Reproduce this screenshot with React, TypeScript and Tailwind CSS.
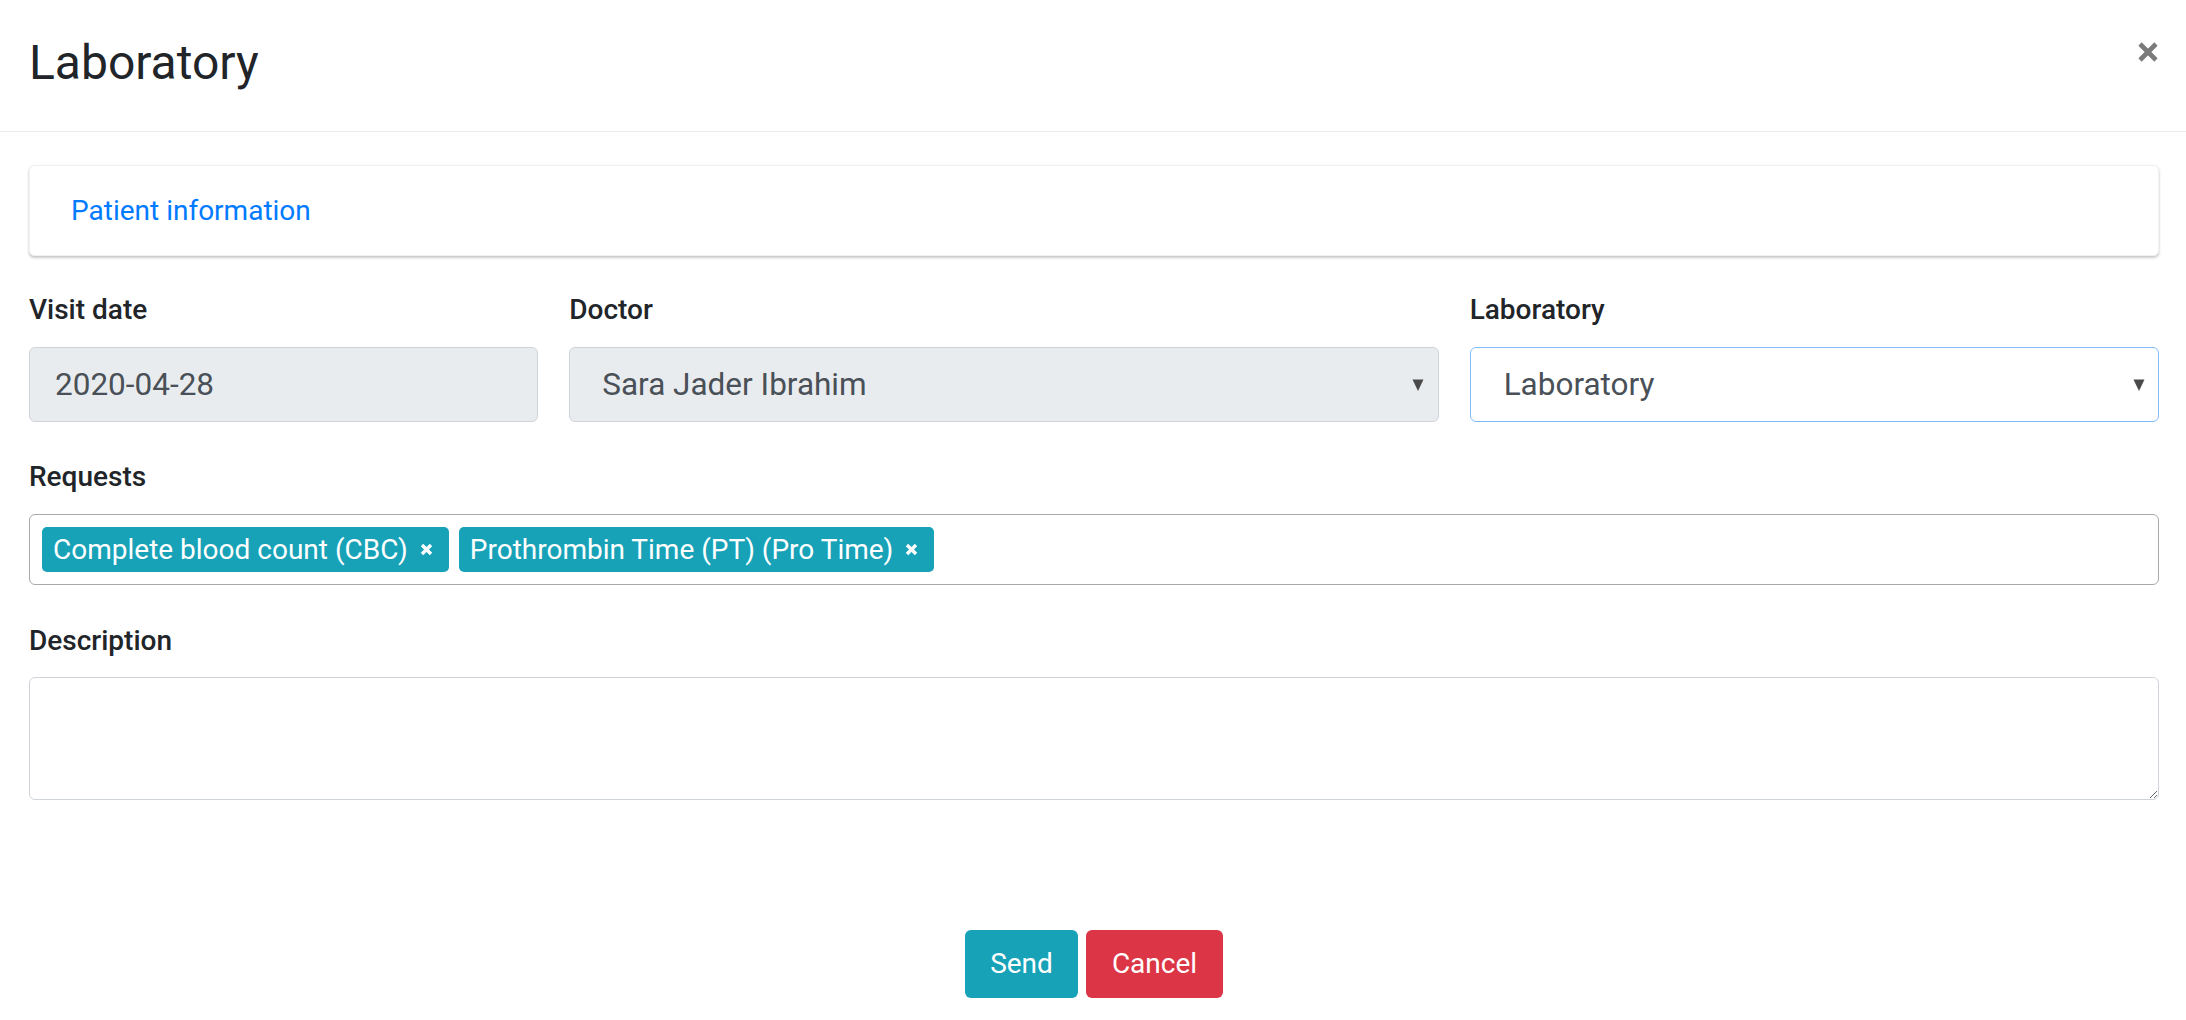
import React from "react";

function Caret() {
  return (
    <svg width="12" height="14" viewBox="0 0 12 14" className="shrink-0">
      <path d="M0.5 1.5 L11.5 1.5 L6 13 Z" fill="#4a4a4a" />
    </svg>
  );
}

function ChipX() {
  return (
    <svg width="13" height="13" viewBox="0 0 13 13" className="shrink-0">
      <path d="M2 2 L11 11 M11 2 L2 11" stroke="#ffffff" strokeWidth="3.4" strokeLinecap="butt" />
    </svg>
  );
}

function Chip({ label }: { label: string }) {
  return (
    <div className="flex h-[45px] items-center rounded-[5px] bg-[#17a2b8] pl-[11px] pr-[16px] text-[28px] leading-[42px] text-white">
      <span>{label}</span>
      <span className="ml-[12px] flex items-center">
        <ChipX />
      </span>
    </div>
  );
}

export default function App() {
  return (
    <div className="min-h-[1020px] w-full bg-white text-[#212529] [font-family:Roboto,'Liberation_Sans',sans-serif]">
      {/* Header */}
      <div className="flex h-[132px] items-start justify-between border-b border-[#e9ecef] pl-[29px] pr-[27px]">
        <h4 className="pt-[39px] text-[48px] font-normal leading-none">Laboratory</h4>
        <div className="pt-[41px]">
          <svg width="22" height="22" viewBox="0 0 22 22">
            <path d="M3 3 L19 19 M19 3 L3 19" stroke="#7a7a7a" strokeWidth="4.6" />
          </svg>
        </div>
      </div>

      {/* Body */}
      <div className="pl-[29px] pr-[27px]">
        {/* Card */}
        <div className="mt-[33px] flex h-[91px] items-center rounded-[5px] border border-[#f0f0f0] bg-white pl-[41px] shadow-[0_2px_3px_rgba(0,0,0,0.18),0_1px_2px_rgba(0,0,0,0.08)]">
          <span className="text-[28px] leading-[42px] text-[#007bff]">Patient information</span>
        </div>

        {/* Row 1 */}
        <div className="mt-[33px] grid grid-cols-12 gap-x-[31px]">
          <div className="col-span-3">
            <div className="mb-[16px] text-[28px] font-medium leading-[42px]">Visit date</div>
            <div className="flex h-[75px] items-center rounded-[6px] border border-[#ced4da] bg-[#e9ecef] pl-[25px] text-[31.5px] text-[#495057]">
              2020-04-28
            </div>
          </div>
          <div className="col-span-5">
            <div className="mb-[16px] text-[28px] font-medium leading-[42px]">Doctor</div>
            <div className="flex h-[75px] items-center justify-between rounded-[6px] border border-[#ced4da] bg-[#e9ecef] pl-[32px] pr-[14px] text-[31.5px] text-[#495057]">
              <span>Sara Jader Ibrahim</span>
              <Caret />
            </div>
          </div>
          <div className="col-span-4">
            <div className="mb-[16px] text-[28px] font-medium leading-[42px]">Laboratory</div>
            <div className="flex h-[75px] items-center justify-between rounded-[6px] border border-[#80bdff] bg-white pl-[33px] pr-[13px] text-[31.5px] text-[#495057]">
              <span>Laboratory</span>
              <Caret />
            </div>
          </div>
        </div>

        {/* Requests */}
        <div className="mt-[34px]">
          <div className="mb-[16px] text-[28px] font-medium leading-[42px]">Requests</div>
          <div className="flex h-[71px] items-center gap-[10px] rounded-[6px] border border-[#aaaaaa] bg-white pl-[12px]">
            <Chip label="Complete blood count (CBC)" />
            <Chip label="Prothrombin Time (PT) (Pro Time)" />
          </div>
        </div>

        {/* Description */}
        <div className="mt-[35px]">
          <div className="mb-[15px] text-[28px] font-medium leading-[42px]">Description</div>
          <textarea
            className="block h-[123px] w-full rounded-[6px] border border-[#ced4da] bg-white p-[12px] text-[28px] outline-none"
            defaultValue=""
          />
        </div>

        {/* Buttons */}
        <div className="mt-[130px] flex justify-center gap-[8px]">
          <button className="flex h-[68px] w-[113px] items-center justify-center rounded-[6px] bg-[#17a2b8] text-[28px] text-white">
            Send
          </button>
          <button className="flex h-[68px] w-[137px] items-center justify-center rounded-[6px] bg-[#dc3545] text-[28px] text-white">
            Cancel
          </button>
        </div>
      </div>
    </div>
  );
}
